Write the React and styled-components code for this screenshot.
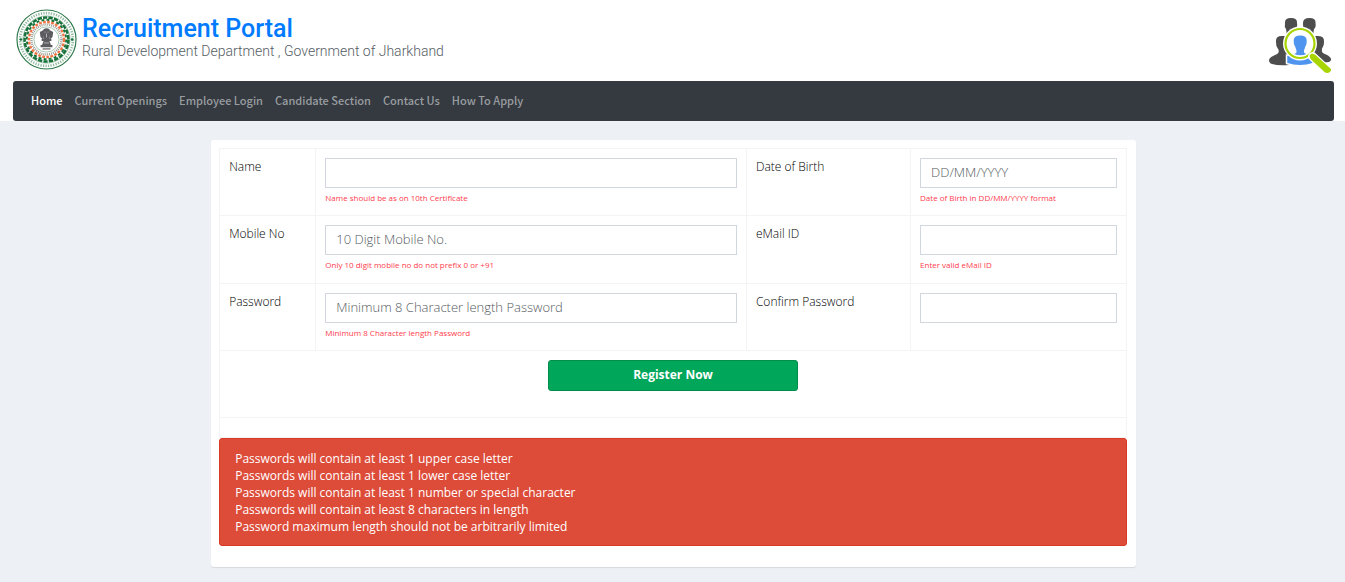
import React from "react";
import styled, { createGlobalStyle } from "styled-components";

const GlobalStyle = createGlobalStyle`
  * {
    box-sizing: border-box;
  }

  body {
    margin: 0;
    background: #edf1f5;
    font-family: "Open Sans", sans-serif;
    font-size: 12px;
    color: #000;
  }
`;

const Top = styled.div`
  background: #fff;
  padding: 9px 11px 0 13px;
`;

const Header = styled.header`
  display: flex;
  justify-content: space-between;
  height: 72px;
`;

const Brand = styled.div`
  display: flex;
  gap: 5px;
  padding-left: 3px;
`;

const Title = styled.h1`
  margin: 6px 0 0;
  font-family: Roboto, sans-serif;
  font-size: 25px;
  line-height: 28px;
  font-weight: 500;
  color: #007bff;
`;

const Subtitle = styled.p`
  margin: 0;
  font-family: Roboto, sans-serif;
  font-size: 14px;
  font-weight: 300;
  line-height: 16px;
  color: #555d64;
`;

const Nav = styled.nav`
  display: flex;
  flex-wrap: wrap;
  gap: 12px;
  padding: 0 18px 2px;
  background: #343a40;
  border-radius: 3px;
  font-family: "Noto Sans CJK SC", sans-serif;
  font-size: 11px;
  line-height: 38px;
`;

const NavLink = styled.a`
  color: ${(props) => (props.$active ? "#fff" : "#9a9da0")};
  font-weight: 500;
  text-decoration: none;
`;

const Main = styled.main`
  padding: 19px 11px 14px 13px;
`;

const Card = styled.form`
  width: 70%;
  margin: 0 auto;
  padding: 8px 9px 21px 8px;
  background: #fff;
  border-radius: 3px;
  box-shadow: 0 1px 1px rgba(0, 0, 0, 0.1);
`;

const FormTable = styled.table`
  width: 100%;
  table-layout: fixed;
  border-collapse: collapse;
`;

const Row = styled.tr`
  height: ${(props) => props.$height || 67}px;
`;

const Cell = styled.td`
  border: 1px solid #f4f4f4;
  padding: 9px;
  vertical-align: top;
  text-align: ${(props) => (props.$center ? "center" : "left")};
`;

const SpacerCell = styled.td`
  border: 1px solid #f4f4f4;
  padding: 0;
`;

const Label = styled.label`
  display: block;
  font-weight: 300;
  line-height: 18px;
`;

const Input = styled.input`
  display: block;
  width: 100%;
  height: 30px;
  padding: 0 10px 2px;
  border: 1px solid #d2d6de;
  border-radius: 0;
  background: #fff;
  font-family: "Open Sans", sans-serif;
  font-size: 13px;
  color: #555;

  &::placeholder {
    font-weight: 300;
    color: #555b61;
    opacity: 1;
  }
`;

const Hint = styled.small`
  display: block;
  padding-top: 3px;
  font-size: 8px;
  line-height: 14px;
  color: #ff3b4b;
`;

const RegisterButton = styled.button`
  width: 250px;
  height: 31px;
  padding: 0 12px 2px;
  border: 1px solid #008d4c;
  border-radius: 3px;
  background: #00a65a;
  color: #fff;
  font-family: "Open Sans", sans-serif;
  font-size: 12px;
  font-weight: 700;
  cursor: pointer;
`;

const Rules = styled.div`
  padding: 11px 15px 10px;
  border: 1px solid #d73925;
  border-radius: 3px;
  background: #dd4b39;
  color: #fff;
  line-height: 17px;

  p {
    margin: 0;
  }
`;

const links = [
  "Home",
  "Current Openings",
  "Employee Login",
  "Candidate Section",
  "Contact Us",
  "How To Apply",
];

const fields = [
  [
    { id: "name", label: "Name", hint: "Name should be as on 10th Certificate" },
    {
      id: "dob",
      label: "Date of Birth",
      placeholder: "DD/MM/YYYY",
      hint: "Date of Birth in DD/MM/YYYY format",
    },
  ],
  [
    {
      id: "mobile",
      label: "Mobile No",
      placeholder: "10 Digit Mobile No.",
      hint: "Only 10 digit mobile no do not prefix 0 or +91",
    },
    { id: "email", label: "eMail ID", hint: "Enter valid eMail ID" },
  ],
  [
    {
      id: "password",
      label: "Password",
      type: "password",
      placeholder: "Minimum 8 Character length Password",
      hint: "Minimum 8 Character length Password",
    },
    { id: "confirm", label: "Confirm Password", type: "password" },
  ],
];

const rules = [
  "Passwords will contain at least 1 upper case letter",
  "Passwords will contain at least 1 lower case letter",
  "Passwords will contain at least 1 number or special character",
  "Passwords will contain at least 8 characters in length",
  "Password maximum length should not be arbitrarily limited",
];

function Seal() {
  return (
    <svg width="61" height="61" viewBox="0 0 62 62" fill="none" aria-hidden="true">
      <circle cx="31" cy="31" r="30" fill="#fff" stroke="#2f7a4b" strokeWidth="1.2" />
      <circle cx="31" cy="31" r="26.8" stroke="#4d8c62" strokeWidth="2.6" strokeDasharray="1.3 1.3" opacity="0.6" />
      <circle cx="31" cy="31" r="24" stroke="#4d8c62" strokeWidth="0.5" />
      <circle cx="31" cy="31" r="22.3" stroke="#17713a" strokeWidth="2.6" strokeDasharray="4.4 1.2" />
      <circle cx="31" cy="31" r="20" stroke="#17713a" strokeWidth="2" strokeDasharray="3 2.2" />
      <circle cx="31" cy="31" r="17.8" stroke="#ef7443" strokeWidth="2.4" strokeDasharray="2.8 1.4" />
      <circle cx="31" cy="31" r="15.2" stroke="#9a9a94" strokeWidth="2.4" strokeDasharray="1 1" />
      <circle cx="31" cy="31" r="12.8" fill="#fff" stroke="#7fae8f" strokeWidth="0.7" />
      <circle cx="5" cy="31" r="1.3" fill="#17713a" />
      <circle cx="57" cy="31" r="1.3" fill="#17713a" />
      <g fill="#5c5c60">
        <path d="M28 20.500q3-2 6 0l1 3-1 7h-6l-1-7z" />
        <path d="M27.500 21.500l-3.300 2 .7 5 3.100 3zM34.500 21.500l3.300 2-.7 5-3.100 3z" />
        <path d="M26 30.500h10v2H26zM28 32.500h6l1.500 4h-9zM25 36.500h12v2.500H25z" />
        <path d="M27 40h8v1.200h-8z" />
      </g>
      <path d="M29 23.500h1M32 23.500h1M31 25v4M28.500 34.500h5" stroke="#c9c9c9" strokeWidth="0.8" />
    </svg>
  );
}

function SearchPeople() {
  return (
    <svg width="66" height="66" viewBox="0 0 66 66" aria-hidden="true">
      <g fill="#4d4d4d">
        <path d="M17 14q-.5-5 6-5 6.500 0 6 5 .8 4-1.500 6l-1 6h-7.500l-1-6q-1.800-2-1-6z" />
        <path d="M35 14q0-5 6.500-5 6.500 0 6 5 .8 4-1.500 6l-1 6H37.500l-1-6q-2-2-1.500-6z" />
        <path d="M8 33q-.5-6 5.500-6H21v29q-11 .8-17-1-3-1-3-4 0-2.500 5-4.500 4-1.500 4.500-3 .8-2.500-1-4.500Q8 37 8 33z" />
        <path d="M56 33q.5-6-5.500-6H44v27q10 0 17-1 2.500-1 2-3-.5-2.500-5-4.500-4-1.500-4-3-.8-2.500.8-4.500Q56 37 56 33z" />
      </g>
      <path d="M18.500 46v8.500q13.500 4.500 27 0V46z" fill="#4f94ef" stroke="#fff" strokeWidth="1.500" />
      <circle cx="32" cy="34.500" r="17" fill="#fff" />
      <circle cx="32" cy="34.500" r="14.500" fill="#fff" stroke="#a8d500" strokeWidth="2.200" />
      <path d="M25.700 31.500q0-5 6.500-5t6.500 5q.4 4-1.700 7l-1 3v2q1 1 2.500 1.500-6 2.500-12.500 0 1.500-.5 2.500-1.500v-2l-1-3q-2.200-3-1.800-7z" fill="#4f94ef" />
      <path d="M44.500 47.500l14 13" stroke="#fff" strokeWidth="9" strokeLinecap="round" />
      <path d="M44 44.500l3 1 16 14.500q.5 3-3.500 4-2 0-3-1L43 50.500q-2-3-1-4.500 1-1.500 2-1.500z" fill="#a8d500" />
    </svg>
  );
}

function Field({ id, label, type = "text", placeholder, hint }) {
  return (
    <>
      <Cell>
        <Label htmlFor={id}>{label}</Label>
      </Cell>
      <Cell>
        <Input id={id} name={id} type={type} placeholder={placeholder} />
        {hint && <Hint>{hint}</Hint>}
      </Cell>
    </>
  );
}

function App() {
  return (
    <>
      <GlobalStyle />
      <Top>
        <Header>
          <Brand>
            <Seal />
            <div>
              <Title>Recruitment Portal</Title>
              <Subtitle>Rural Development Department , Government of Jharkhand</Subtitle>
            </div>
          </Brand>
          <SearchPeople />
        </Header>
        <Nav>
          {links.map((link, i) => (
            <NavLink key={link} href="#" $active={i === 0}>
              {link}
            </NavLink>
          ))}
        </Nav>
      </Top>
      <Main>
        <Card onSubmit={(e) => e.preventDefault()}>
          <FormTable>
            <colgroup>
              <col width="10.6%" />
              <col width="47.5%" />
              <col width="18.1%" />
              <col width="23.8%" />
            </colgroup>
            <tbody>
              {fields.map((row, i) => (
                <Row key={row[0].id} $height={i === 1 ? 68 : 67}>
                  {row.map((field) => (
                    <Field key={field.id} {...field} />
                  ))}
                </Row>
              ))}
              <Row>
                <Cell colSpan={4} $center>
                  <RegisterButton type="submit">Register Now</RegisterButton>
                </Cell>
              </Row>
              <Row $height={20}>
                <SpacerCell colSpan={4} />
              </Row>
            </tbody>
          </FormTable>
          <Rules>
            {rules.map((rule) => (
              <p key={rule}>{rule}</p>
            ))}
          </Rules>
        </Card>
      </Main>
    </>
  );
}

export default App;
